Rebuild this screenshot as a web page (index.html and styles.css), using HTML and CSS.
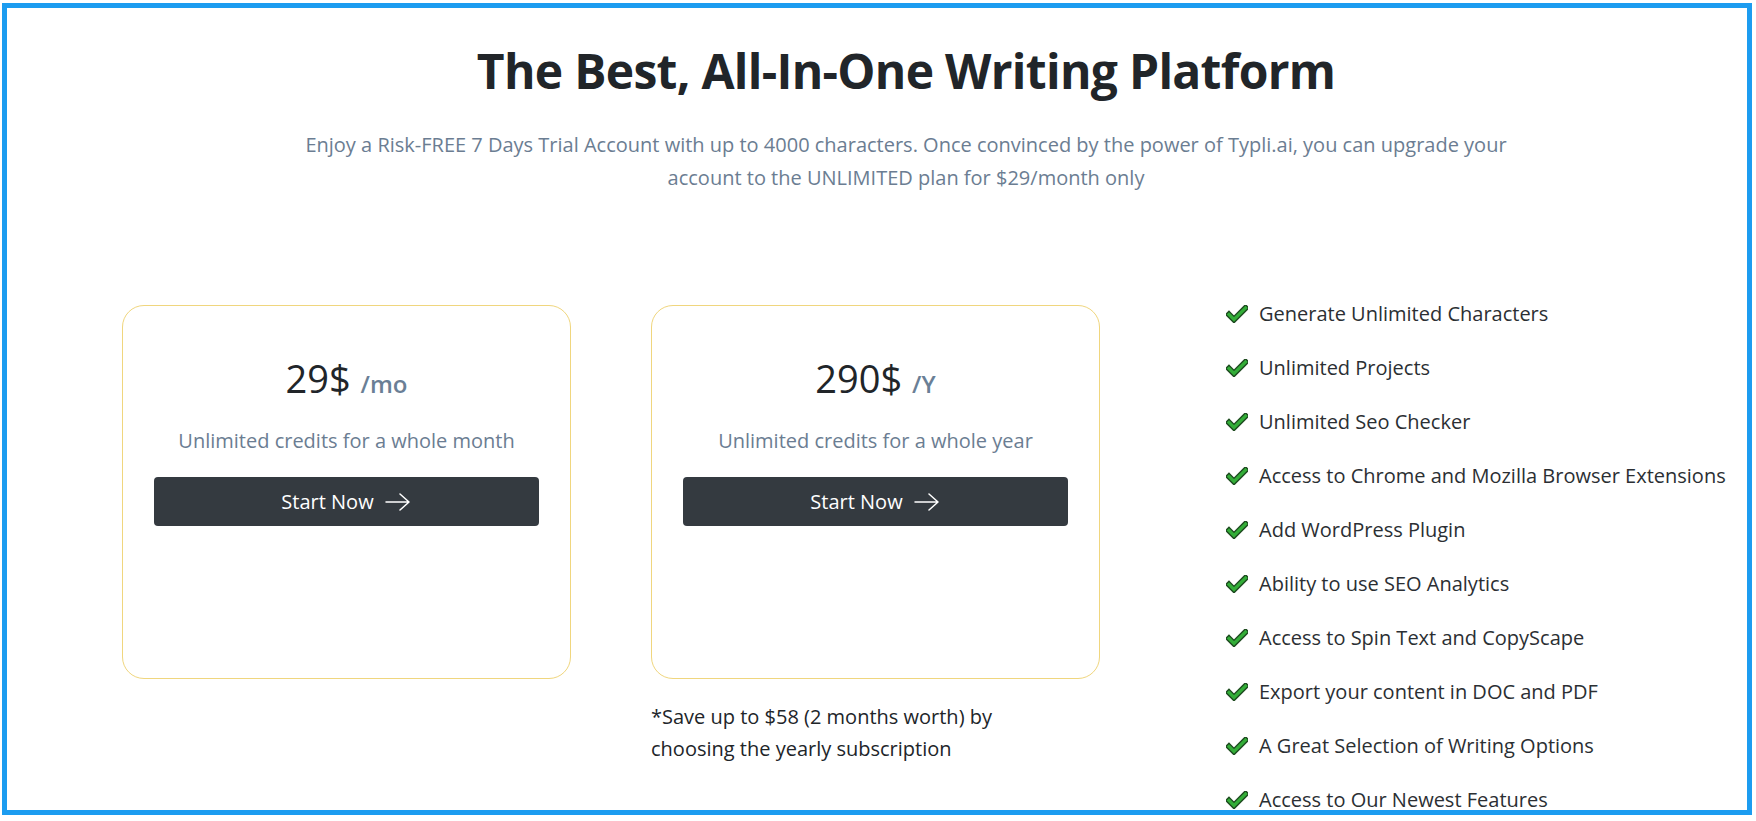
FILE: index.html
```html
<!DOCTYPE html>
<html lang="en">
<head>
  <meta charset="UTF-8" />
  <meta name="viewport" content="width=device-width, initial-scale=1.0"/>
  <title>Typli.ai Pricing</title>
  <link rel="stylesheet" href="styles.css">
</head>
<body>
  <div class="frame">
    <header class="intro">
      <h1>The Best, All-In-One Writing Platform</h1>
      <p>Enjoy a Risk-FREE 7 Days Trial Account with up to 4000 characters. Once convinced by the power of Typli.ai, you can upgrade your account to the UNLIMITED plan for $29/month only</p>
    </header>

    <section class="plans">
      <div class="plan-col">
        <div class="card">
          <h3 class="price">29$ <span>/mo</span></h3>
          <p class="desc">Unlimited credits for a whole month</p>
          <a href="#" class="btn">Start Now
            <svg width="28" height="20" viewBox="0 0 28 20" fill="none" stroke="currentColor" stroke-width="1.5" stroke-linecap="round" stroke-linejoin="round"><path d="M2 10h23M16 2l9 8-9 8"/></svg>
          </a>
        </div>
      </div>

      <div class="plan-col">
        <div class="card">
          <h3 class="price">290$ <span>/Y</span></h3>
          <p class="desc">Unlimited credits for a whole year</p>
          <a href="#" class="btn">Start Now
            <svg width="28" height="20" viewBox="0 0 28 20" fill="none" stroke="currentColor" stroke-width="1.5" stroke-linecap="round" stroke-linejoin="round"><path d="M2 10h23M16 2l9 8-9 8"/></svg>
          </a>
        </div>
        <p class="note">*Save up to $58 (2 months worth) by choosing the yearly subscription</p>
      </div>

      <ul class="features">
        <li><svg class="check" viewBox="0 0 22 18"><path d="M3 9.5l5 5L19.5 3"/><path d="M3 9.5l5 5L19.5 3"/></svg>Generate Unlimited Characters</li>
        <li><svg class="check" viewBox="0 0 22 18"><path d="M3 9.5l5 5L19.5 3"/><path d="M3 9.5l5 5L19.5 3"/></svg>Unlimited Projects</li>
        <li><svg class="check" viewBox="0 0 22 18"><path d="M3 9.5l5 5L19.5 3"/><path d="M3 9.5l5 5L19.5 3"/></svg>Unlimited Seo Checker</li>
        <li><svg class="check" viewBox="0 0 22 18"><path d="M3 9.5l5 5L19.5 3"/><path d="M3 9.5l5 5L19.5 3"/></svg>Access to Chrome and Mozilla Browser Extensions</li>
        <li><svg class="check" viewBox="0 0 22 18"><path d="M3 9.5l5 5L19.5 3"/><path d="M3 9.5l5 5L19.5 3"/></svg>Add WordPress Plugin</li>
        <li><svg class="check" viewBox="0 0 22 18"><path d="M3 9.5l5 5L19.5 3"/><path d="M3 9.5l5 5L19.5 3"/></svg>Ability to use SEO Analytics</li>
        <li><svg class="check" viewBox="0 0 22 18"><path d="M3 9.5l5 5L19.5 3"/><path d="M3 9.5l5 5L19.5 3"/></svg>Access to Spin Text and CopyScape</li>
        <li><svg class="check" viewBox="0 0 22 18"><path d="M3 9.5l5 5L19.5 3"/><path d="M3 9.5l5 5L19.5 3"/></svg>Export your content in DOC and PDF</li>
        <li><svg class="check" viewBox="0 0 22 18"><path d="M3 9.5l5 5L19.5 3"/><path d="M3 9.5l5 5L19.5 3"/></svg>A Great Selection of Writing Options</li>
        <li><svg class="check" viewBox="0 0 22 18"><path d="M3 9.5l5 5L19.5 3"/><path d="M3 9.5l5 5L19.5 3"/></svg>Access to Our Newest Features</li>
      </ul>
    </section>
  </div>
</body>
</html>
```
FILE: styles.css
```css
body {
  font-family: "Open Sans", "Noto Sans", sans-serif;
  margin: 0;
  background: #fff;
  color: #212529;
  overflow: hidden;
}

.frame {
  box-sizing: border-box;
  width: 1750px;
  height: 812px;
  margin: 3px 0 0 2px;
  border: 5px solid #1c9cf0;
  overflow: hidden;
  background: #fff;
}

.intro {
  margin-left: 58px;
  text-align: center;
}

.intro h1 {
  margin: 34px 0 0;
  font-size: 48px;
  line-height: 1.2;
  font-weight: 700;
  letter-spacing: -0.7px;
  color: #212529;
}

.intro p {
  max-width: 1220px;
  margin: 28px auto 0;
  font-size: 20px;
  line-height: 33px;
  color: #6b7d92;
}

.plans {
  display: grid;
  grid-template-columns: 449px 449px 1fr;
  column-gap: 80px;
  margin-top: 111px;
  padding-left: 115px;
}

.card {
  box-sizing: border-box;
  height: 374px;
  padding: 50px 31px 0;
  border: 1px solid #f0d67e;
  border-radius: 22px;
  text-align: center;
}

.price {
  margin: 0;
  font-size: 38px;
  line-height: 1.2;
  font-weight: 400;
  color: #212529;
}

.price span {
  font-size: 24px;
  font-weight: 600;
  color: #6a7f96;
}

.desc {
  margin: 26px 0 0;
  font-size: 20px;
  line-height: 28px;
  color: #6b7d92;
}

.btn {
  display: flex;
  align-items: center;
  justify-content: center;
  gap: 10px;
  height: 49px;
  margin-top: 22px;
  background: #343a40;
  color: #fff;
  border-radius: 4px;
  font-size: 20px;
  text-decoration: none;
}

.note {
  max-width: 380px;
  margin: 22px 0 0;
  font-size: 20px;
  line-height: 32px;
  color: #212529;
}

.features {
  list-style: none;
  margin: -18px 0 0;
  padding: 0 0 0 46px;
}

.features li {
  display: flex;
  align-items: center;
  gap: 11px;
  padding: 12px 0;
  font-size: 20px;
  line-height: 30px;
  color: #2b2f33;
  white-space: nowrap;
}

.check {
  width: 22px;
  height: 18px;
  fill: none;
  stroke-linecap: square;
  stroke-linejoin: miter;
}

.check path:first-child {
  stroke: #1d4a1f;
  stroke-width: 6;
}

.check path:last-child {
  stroke: #33ad38;
  stroke-width: 3.2;
}
```
